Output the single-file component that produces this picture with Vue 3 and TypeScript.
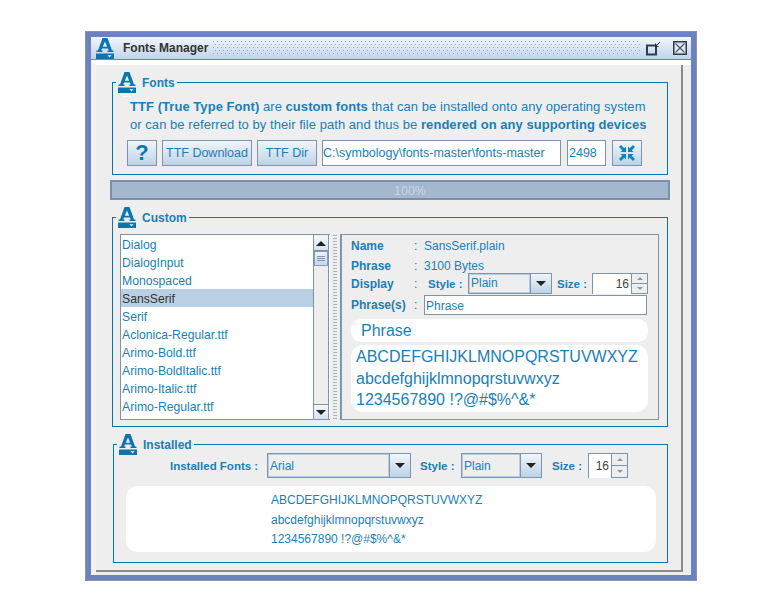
<script setup lang="ts">
const fonts: string[] = [
  'Dialog', 'DialogInput', 'Monospaced', 'SansSerif', 'Serif',
  'Aclonica-Regular.ttf', 'Arimo-Bold.ttf', 'Arimo-BoldItalic.ttf',
  'Arimo-Italic.ttf', 'Arimo-Regular.ttf',
];
const selected = 'SansSerif';
const specimen: string[] = [
  'ABCDEFGHIJKLMNOPQRSTUVWXYZ',
  'abcdefghijklmnopqrstuvwxyz',
  '1234567890 !?@#$%^&*',
];
</script>

<template>
  <div class="desk">
    <svg class="defs" width="0" height="0">
      <symbol id="logo" viewBox="0 0 18 21">
        <path fill="#0b76ad" fill-rule="evenodd" d="M6.500 0h5L16 12.500h1.500V14h-6v-1.500h1.300L12 10.500H6l-.8 2h1.300V14h-6v-1.500H2zM9 3.500 6.800 8.800h4.400z" />
        <rect x="0" y="15.500" width="18" height="5.500" fill="#0b76ad" />
        <path fill="#fff" d="M11.500 17.200h4l-2 2.300z" />
      </symbol>
      <pattern id="dots" width="4" height="6" patternUnits="userSpaceOnUse">
        <rect x="0" y="0" width="1" height="1" fill="#8aa2bf" />
        <rect x="2" y="3" width="1" height="1" fill="#8aa2bf" />
      </pattern>
    </svg>
    <div class="window">
      <div class="titlebar">
        <svg class="logo-title"><use href="#logo" /></svg>
        <span class="title">Fonts Manager</span>
        <svg class="dither" width="427" height="15"><rect width="427" height="15" fill="url(#dots)" /></svg>
        <svg class="win-btn restore" width="15" height="15" viewBox="0 0 15 15">
          <rect x="1" y="4.500" width="9" height="9" fill="none" stroke="#2f3d52" stroke-width="2" />
          <path d="M14 1 9.500 5.500M9.500 2.500v3h3" fill="none" stroke="#26303d" />
        </svg>
        <svg class="win-btn close" width="14" height="14" viewBox="0 0 14 14">
          <rect x=".75" y=".75" width="12.500" height="12.500" fill="#dfe8f1" stroke="#2e3a4e" stroke-width="1.500" />
          <path d="M2.500 2.500l9 9M11.500 2.500l-9 9" stroke="#4a5a70" stroke-width="1.200" />
        </svg>
      </div>

      <div class="body">
        <div class="frame">
          <section class="group fonts-group">
            <div class="legend"><svg class="logo"><use href="#logo" /></svg><span>Fonts</span><i class="dash"></i></div>
            <p class="intro"><b>TTF (True Type Font)</b> are <b>custom fonts</b> that can be installed onto any operating system</p>
            <p class="intro">or can be referred to by their file path and thus be <b>rendered on any supporting devices</b></p>
            <div class="tools">
              <button class="btn help">?</button>
              <button class="btn dl">TTF Download</button>
              <button class="btn dir">TTF Dir</button>
              <div class="field path">C:\symbology\fonts-master\fonts-master</div>
              <div class="field count">2498</div>
              <button class="btn shrink">
                <svg width="16" height="16" viewBox="0 0 16 16" fill="#1583bb">
                  <path d="M7 7H1.500L3.200 5.300 0 2 2 0 5.300 3.200 7 1.500z" />
                  <path d="M9 7H14.500L12.800 5.300 16 2 14 0 10.700 3.200 9 1.500z" />
                  <path d="M7 9H1.500L3.200 10.700 0 14 2 16 5.300 12.800 7 14.500z" />
                  <path d="M9 9H14.500L12.800 10.700 16 14 14 16 10.700 12.800 9 14.500z" />
                </svg>
              </button>
            </div>
          </section>

          <div class="progress">100%</div>

          <section class="group custom-group">
            <div class="legend"><svg class="logo"><use href="#logo" /></svg><span>Custom</span></div>
            <div class="custom-row">
              <div class="list-box">
                <ul class="list">
                  <li v-for="f in fonts" :key="f" :class="{ sel: f === selected }">{{ f }}</li>
                </ul>
                <div class="scroll">
                  <div class="sb-btn"><i class="tri up"></i></div>
                  <div class="thumb"><i></i><i></i><i></i></div>
                  <div class="track"></div>
                  <div class="sb-btn"><i class="tri"></i></div>
                </div>
              </div>
              <div class="divider"></div>
              <div class="detail">
                <div class="row r-name"><b class="lab">Name</b><span class="colon">:</span><span>SansSerif.plain</span></div>
                <div class="row r-phrase"><b class="lab">Phrase</b><span class="colon">:</span><span>3100 Bytes</span></div>
                <div class="row r-display">
                  <b class="lab">Display</b><span class="colon">:</span>
                  <b class="style-lab">Style :</b>
                  <div class="combo c-style-a"><span class="combo-val">Plain</span><span class="combo-arrow"><i class="tri"></i></span></div>
                  <b class="size-lab">Size :</b>
                  <div class="spinner s-a">
                    <span class="spin-val">16</span>
                    <span class="spin-btns"><span><i class="mini up"></i></span><span><i class="mini"></i></span></span>
                  </div>
                </div>
                <div class="row r-input"><b class="lab">Phrase(s)</b><span class="colon">:</span><div class="field phrase-in">Phrase</div></div>
                <div class="pill">Phrase</div>
                <div class="sample">
                  <div v-for="line in specimen" :key="line">{{ line }}</div>
                </div>
              </div>
            </div>
          </section>

          <section class="group installed-group">
            <div class="legend"><svg class="logo"><use href="#logo" /></svg><span>Installed</span></div>
            <div class="inst-row">
              <b class="inst-font">Installed Fonts :</b>
              <div class="combo c-font"><span class="combo-val">Arial</span><span class="combo-arrow"><i class="tri"></i></span></div>
              <b class="inst-style">Style :</b>
              <div class="combo c-style-b"><span class="combo-val">Plain</span><span class="combo-arrow"><i class="tri"></i></span></div>
              <b class="inst-size">Size :</b>
              <div class="spinner s-b">
                <span class="spin-val">16</span>
                <span class="spin-btns"><span><i class="mini up"></i></span><span><i class="mini"></i></span></span>
              </div>
            </div>
            <div class="inst-sample">
              <div v-for="line in specimen" :key="line">{{ line }}</div>
            </div>
          </section>
        </div>
      </div>
    </div>
  </div>
</template>

<style>
html, body { margin: 0; background: #fff; }
</style>

<style scoped>
.desk {
  width: 784px;
  height: 614px;
  box-sizing: border-box;
  padding: 31px 0 0 85px;
  background: #fff;
  font-family: "Liberation Sans", Arial, sans-serif;
  font-size: 12px;
  color: #1a7fb5;
  overflow: hidden;
}
.defs { position: absolute; }
.window {
  width: 612px;
  height: 550px;
  box-sizing: border-box;
  border: 1px solid #8d93a3;
  background: #6a82bd;
  padding: 5px;
  display: flex;
  flex-direction: column;
}

/* title */
.titlebar {
  height: 22px;
  flex: none;
  display: flex;
  align-items: center;
  background: linear-gradient(#f3f6fa, #bfd4e8);
  border-bottom: 1px solid #6a84c0;
}
.logo-title { width: 18px; height: 21px; margin-left: 5px; flex: none; }
.logo { width: 18px; height: 21px; flex: none; }
.title { margin-left: 9px; width: 90px; font-weight: bold; color: #333; white-space: nowrap; }
.dither { flex: none; }
.win-btn { flex: none; }
.restore { margin-left: 6px; }
.close { margin-left: 12px; }

/* frame */
.body {
  flex: 1;
  min-height: 0;
  background: #eee;
  border-left: 5px solid #f2f2f2;
  border-top: 5px solid #fff;
}
.frame {
  display: flow-root;
  width: 584px;
  height: 505px;
  border-right: 2px solid #8a8a8a;
  border-bottom: 2px solid #8a8a8a;
  background: #eee;
  padding-left: 1px;
}

.group {
  position: relative;
  box-sizing: border-box;
  width: 556px;
  margin-left: 15px;
  border: 1px solid #0b76ad;
}
.legend {
  position: absolute;
  left: 3px;
  top: -11px;
  display: flex;
  align-items: flex-start;
  gap: 6px;
  padding: 0 2px;
  background: #eee;
  font-weight: bold;
  height: 21px;
}
.legend span { line-height: 16px; margin-top: 3px; }
.dash {
  position: absolute;
  left: 7px;
  top: 24px;
  width: 8px;
  height: 1px;
  background: #fff;
}

/* fonts group */
.fonts-group { height: 93px; margin-top: 17px; padding: 15px 0 0 17px; }
.intro {
  margin: 0;
  font-size: 13px;
  letter-spacing: .05px;
  line-height: 18px;
  white-space: nowrap;
}
.tools { display: flex; height: 26px; margin-top: 6px; margin-left: -3px; }
.btn {
  box-sizing: border-box;
  height: 26px;
  padding: 0;
  border: 1px solid #7f93ab;
  background: linear-gradient(#f1f5f9, #bcd3e7);
  color: #1a7fb5;
  font-family: inherit;
  font-size: 12.500px;
  display: flex;
  align-items: center;
  justify-content: center;
}
.help { width: 30px; font-size: 22px; font-weight: bold; color: #0b76ad; }
.dl { width: 90px; margin-left: 5px; }
.dir { width: 60px; margin-left: 5px; }
.field {
  box-sizing: border-box;
  background: #fff;
  border: 1px solid #7f93ab;
  display: flex;
  align-items: center;
  white-space: nowrap;
  font-size: 12.500px;
}
.path { width: 239px; margin-left: 5px; }
.count { width: 39px; margin-left: 6px; padding-left: 1px; }
.shrink { width: 30px; margin-left: 6px; }

.progress {
  box-sizing: border-box;
  width: 560px;
  height: 20px;
  margin: 5px 0 0 13px;
  border: 2px solid #7b8fa9;
  padding-left: 40px;
  background: #a3b8cf;
  color: #c9d5e1;
  text-align: center;
  line-height: 18px;
  font-size: 12.500px;
}

/* custom group */
.custom-group { height: 210px; margin-top: 17px; padding: 16px 0 0 7px; }
.custom-row { display: flex; height: 186px; }
.list-box {
  box-sizing: border-box;
  width: 210px;
  display: flex;
  background: #fff;
  border-top: 1px solid #7f93ab;
  border-left: 1px solid #7f93ab;
  border-bottom: 1px solid #7f93ab;
  padding-right: 1px;
}
.list { list-style: none; margin: 0; padding: 0; flex: 1; background: #fff; font-size: 12.200px; }
.list li { box-sizing: border-box; height: 18px; line-height: 18px; padding: 1px 0 0 1px; white-space: nowrap; }
.list li.sel { background: #b8cfe4; color: #333; }
.scroll {
  box-sizing: border-box;
  width: 16px;
  flex: none;
  display: flex;
  flex-direction: column;
  background: #eee;
  border-left: 1px solid #7f93ab;
  border-right: 1px solid #7f93ab;
  padding-top: 1px;
}
.sb-btn {
  height: 14px;
  flex: none;
  display: flex;
  align-items: center;
  justify-content: center;
  background: linear-gradient(#f5f8fb, #d5e2ee);
  border-bottom: 1px solid #7f93ab;
}
.sb-btn:last-child { border-top: 1px solid #7f93ab; border-bottom: 0; }
.thumb {
  height: 15px;
  flex: none;
  box-sizing: border-box;
  border: 1px solid #7e9cc8;
  background: linear-gradient(#eef3f8, #c6d8ea);
  display: flex;
  flex-direction: column;
  justify-content: center;
  gap: 1px;
  padding: 0 2px;
}
.thumb i { display: block; height: 1px; background: #7e93b5; }
.track { flex: 1; }
.tri {
  display: block;
  width: 0;
  height: 0;
  border-left: 5px solid transparent;
  border-right: 5px solid transparent;
  border-top: 5px solid #222;
}
.tri.up { border-top: 0; border-bottom: 5px solid #222; }
.divider {
  width: 4px;
  margin: 0 3px;
  background-image: radial-gradient(circle, #aab4bd .7px, transparent .9px);
  background-size: 2px 3px;
}
.detail {
  box-sizing: border-box;
  width: 319px;
  border: 1px solid #7f93ab;
  border-left-width: 2px;
  padding: 1px 10px 0 9px;
}
.row { display: flex; align-items: center; white-space: nowrap; }
.lab { width: 63px; flex: none; }
.colon { width: 10px; flex: none; }
.r-name { height: 19px; }
.r-phrase { height: 19px; margin-top: 1px; }
.r-display { height: 21px; margin-top: -2px; }
.r-input { height: 20px; margin-top: 1px; }
.style-lab { margin-left: 4px; width: 40px; flex: none; font-size: 11.500px; }
.size-lab { width: 40px; flex: none; padding-left: 5px; box-sizing: border-box; font-size: 11.500px; }
.phrase-in { width: 223px; height: 20px; padding: 1px 0 0 1px; font-size: 12px; }
.combo {
  box-sizing: border-box;
  display: flex;
  flex: none;
  border: 1px solid #7f93ab;
  background: #eee;
}
.combo-val {
  flex: 1;
  border: 1px solid #b8cfe3;
  padding-left: 1px;
  line-height: 17px;
}
.combo-arrow {
  width: 20px;
  flex: none;
  display: flex;
  align-items: center;
  justify-content: center;
  border-left: 1px solid #7f93ab;
  background: linear-gradient(#f1f5f9, #bcd3e7);
}
.c-style-a { width: 84px; height: 21px; }
.spinner { box-sizing: border-box; display: flex; flex: none; background: #fff; border-top: 1px solid #7f93ab; border-left: 1px solid #7f93ab; }
.s-a { width: 56px; height: 21px; }
.spin-val { flex: 1; text-align: right; padding-right: 2px; line-height: 20px; color: #444; }
.spin-btns { width: 15px; flex: none; display: flex; flex-direction: column; border: 1px solid #7f93ab; border-top: 0; background: #eee; }
.spin-btns span { flex: 1; display: flex; align-items: center; justify-content: center; }
.spin-btns span:first-child { border-bottom: 1px solid #7f93ab; }
.mini {
  display: block;
  width: 0;
  height: 0;
  border-left: 3px solid transparent;
  border-right: 3px solid transparent;
  border-top: 3px solid #8a98a8;
}
.mini.up { border-top: 0; border-bottom: 3px solid #8a98a8; }
.pill {
  height: 23px;
  margin-top: 4px;
  background: #fff;
  border-radius: 10px;
  padding-left: 10px;
  font-size: 16px;
  line-height: 23px;
  width: 297px;
  box-sizing: border-box;
}
.sample {
  height: 67px;
  margin-top: 3px;
  width: 297px;
  box-sizing: border-box;
  background: #fff;
  border-radius: 12px;
  padding: 1px 0 0 5px;
  font-size: 16px;
  line-height: 21.500px;
  white-space: nowrap;
}

/* installed */
.installed-group { width: 555px; margin-left: 16px; height: 119px; margin-top: 17px; padding: 8px 0 0 12px; }
.inst-row { display: flex; align-items: center; height: 25px; padding-left: 44px; white-space: nowrap; }
.inst-row b { flex: none; font-size: 11.500px; }
.inst-font { width: 88px; }
.c-font { width: 144px; height: 25px; margin-left: 9px; }
.inst-row .combo-val { line-height: 22px; }
.inst-style { margin-left: 9px; width: 41px; }
.c-style-b { width: 81px; height: 25px; }
.inst-size { margin-left: 10px; width: 36px; }
.s-b { width: 40px; height: 25px; }
.s-b .spin-val { line-height: 24px; }
.inst-sample {
  box-sizing: border-box;
  width: 530px;
  height: 66px;
  margin-top: 8px;
  background: #fff;
  border-radius: 12px;
  padding: 5px 0 0 145px;
  line-height: 19.500px;
  white-space: nowrap;
}
</style>
